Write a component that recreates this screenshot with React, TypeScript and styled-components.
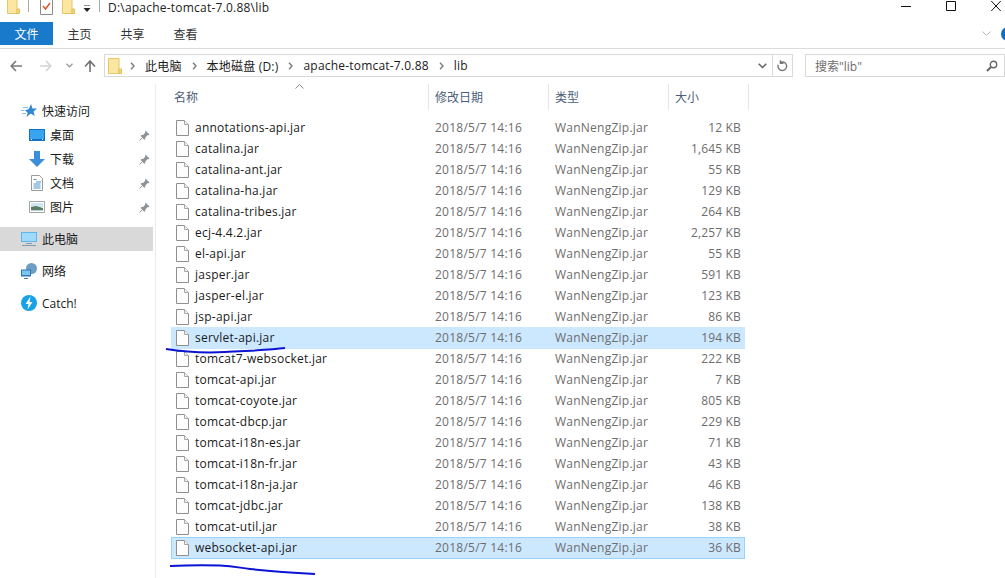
import React from 'react';
import styled, { createGlobalStyle } from 'styled-components';

const Global = createGlobalStyle`
  html, body { margin: 0; padding: 0; background: #fff; overflow: hidden; }
  body { font-family: "Open Sans", "Noto Sans CJK SC", sans-serif; font-size: 12px; color: #1a1a1a; }
`;

const Window = styled.div`
  position: relative;
  width: 1005px;
  height: 578px;
  overflow: hidden;
  display: flex;
  flex-direction: column;
  background: #fff;
`;

const TitleBar = styled.div`
  height: 22px;
  display: flex;
  align-items: flex-start;
  flex: none;
`;

const QuickTools = styled.div`
  display: flex;
  align-items: flex-start;
  padding-left: 7px;
  height: 14px;
`;

const ToolSep = styled.div<{ $ml: number; $mr: number }>`
  width: 1px;
  height: 12px;
  background: #a8a8a8;
  margin: 0 ${p => p.$mr}px 0 ${p => p.$ml}px;
`;

const TitleText = styled.div`
  font-size: 12px;
  line-height: 16px;
  letter-spacing: 0.22px;
  color: #222;
  margin-left: 8px;
`;

const WinButtons = styled.div`
  margin-left: auto;
  display: flex;
  gap: 35px;
  padding-right: 4px;
  color: #111;
`;

const Ribbon = styled.div`
  height: 26px;
  display: flex;
  border-bottom: 1px solid #dadbdc;
  flex: none;
  position: relative;
`;

const FileTab = styled.div`
  width: 53px;
  height: 23px;
  box-sizing: border-box;
  padding-top: 1px;
  background: #1979ca;
  color: #fff;
  display: flex;
  align-items: center;
  justify-content: center;
`;

const Tab = styled.div`
  width: 53px;
  height: 23px;
  box-sizing: border-box;
  padding-top: 1px;
  display: flex;
  align-items: center;
  justify-content: center;
  color: #333;
`;

const RibbonEnd = styled.div`
  margin-left: auto;
  display: flex;
  align-items: center;
  gap: 10px;
  height: 23px;
  margin-right: -10px;
`;

const HelpDot = styled.div`
  width: 14px;
  height: 14px;
  border-radius: 50%;
  background: #0f6fc6;
`;

const NavRow = styled.div`
  height: 23px;
  margin-top: 5px;
  display: flex;
  align-items: stretch;
  flex: none;
`;

const NavButtons = styled.div`
  width: 104px;
  display: flex;
  align-items: center;
  flex: none;
  padding-left: 10px;
  box-sizing: border-box;
`;

const NavGlyph = styled.svg<{ $ml: number }>`
  margin-left: ${p => p.$ml}px;
  flex: none;
`;

const AddressBox = styled.div`
  width: 689px;
  box-sizing: border-box;
  border: 1px solid #d9d9d9;
  display: flex;
  align-items: center;
  flex: none;
  padding-left: 3px;
`;

const Crumb = styled.span`
  color: #1a1a1a;
  letter-spacing: 0.2px;
`;

const CrumbArrow = styled.svg<{ $first?: boolean }>`
  margin: 0 10px 0 ${p => (p.$first ? 8 : 10)}px;
  flex: none;
`;

const AddressEnd = styled.div`
  margin-left: auto;
  display: flex;
  align-items: center;
  height: 100%;
`;

const RefreshCell = styled.div`
  width: 19px;
  height: 100%;
  border-left: 1px solid #d9d9d9;
  display: flex;
  align-items: center;
  justify-content: center;
  margin-left: 5px;
`;

const SearchBox = styled.div`
  margin-left: 12px;
  flex: 1;
  border: 1px solid #d9d9d9;
  display: flex;
  align-items: center;
  justify-content: space-between;
  padding: 0 6px 0 9px;
  color: #6d6d6d;
`;

const Body = styled.div`
  flex: 1;
  display: flex;
  min-height: 0;
  margin-top: 7px;
`;

const Sidebar = styled.nav`
  width: 156px;
  box-sizing: border-box;
  border-right: 1px solid #ececec;
  padding-top: 15px;
  flex: none;
`;

const NavItem = styled.div<{ $depth?: boolean; $active?: boolean; $gap?: number }>`
  height: 24px;
  width: 153px;
  display: flex;
  align-items: center;
  box-sizing: border-box;
  padding-left: ${p => (p.$depth ? 29 : 21)}px;
  margin-bottom: ${p => p.$gap ?? 0}px;
  background: ${p => (p.$active ? '#d9d9d9' : 'transparent')};
  color: #1a1a1a;
  svg.main { flex: none; margin-right: 5px; }
  svg.pin { margin-left: auto; margin-right: 3px; }
`;

const Files = styled.section`
  flex: 1;
  padding-left: 14px;
  min-width: 0;
`;

const HeaderRow = styled.div`
  position: relative;
  display: grid;
  grid-template-columns: 259px 120px 120px 80px;
  height: 26px;
  margin-bottom: 7px;
  color: #4c607a;
`;

const HeaderCell = styled.div<{ $first?: boolean }>`
  display: flex;
  align-items: center;
  padding-left: ${p => (p.$first ? 4 : 6)}px;
  border-right: 1px solid #e5e5e5;
  box-sizing: border-box;
  height: 26px;
`;

const SortMark = styled.svg`
  position: absolute;
  left: 125px;
  top: 0;
`;

const FileRow = styled.div<{ $state?: 'hover' | 'selected' }>`
  position: relative;
  isolation: isolate;
  display: grid;
  grid-template-columns: 259px 120px 120px 71px;
  height: 21px;
  width: 574px;
  margin-left: 1px;
  align-items: center;
  &::before {
    content: '';
    display: ${p => (p.$state ? 'block' : 'none')};
    position: absolute;
    inset: 0 0 -1px 0;
    z-index: -1;
    background: #cce8ff;
    box-shadow: ${p => (p.$state === 'selected' ? 'inset 0 0 0 1px #99d1ff' : 'none')};
  }
`;

const NameCell = styled.div`
  display: flex;
  align-items: center;
  padding-left: 5px;
  color: #1a1a1a;
  letter-spacing: 0.24px;
  svg { margin-right: 6px; flex: none; }
`;

const MetaCell = styled.div`
  color: #6d6d6d;
  padding-left: 5px;
  letter-spacing: 0.24px;
`;

const SizeCell = styled.div`
  color: #6d6d6d;
  text-align: right;
  letter-spacing: 0.15px;
`;

const Annotation = styled.svg`
  position: absolute;
  left: 0;
  top: 0;
  pointer-events: none;
`;

const rows: [string, string][] = [
  ['annotations-api.jar', '12 KB'],
  ['catalina.jar', '1,645 KB'],
  ['catalina-ant.jar', '55 KB'],
  ['catalina-ha.jar', '129 KB'],
  ['catalina-tribes.jar', '264 KB'],
  ['ecj-4.4.2.jar', '2,257 KB'],
  ['el-api.jar', '55 KB'],
  ['jasper.jar', '591 KB'],
  ['jasper-el.jar', '123 KB'],
  ['jsp-api.jar', '86 KB'],
  ['servlet-api.jar', '194 KB'],
  ['tomcat7-websocket.jar', '222 KB'],
  ['tomcat-api.jar', '7 KB'],
  ['tomcat-coyote.jar', '805 KB'],
  ['tomcat-dbcp.jar', '229 KB'],
  ['tomcat-i18n-es.jar', '71 KB'],
  ['tomcat-i18n-fr.jar', '43 KB'],
  ['tomcat-i18n-ja.jar', '46 KB'],
  ['tomcat-jdbc.jar', '138 KB'],
  ['tomcat-util.jar', '38 KB'],
  ['websocket-api.jar', '36 KB'],
];

const FolderIcon = () => (
  <svg width="14" height="16" viewBox="0 0 14 16" style={{ flex: 'none' }}>
    <path d="M.5.5h10.500v15H.5z" fill="#fbe6a2" stroke="#e8c766" />
    <path d="M11 11h2.500v4.500H11z" fill="#f4d77f" stroke="#e3bf5c" />
  </svg>
);

const FileIcon = () => (
  <svg width="13" height="16" viewBox="0 0 13 16">
    <path d="M.5.5h8l4 4v11H.5z" fill="#fdfdfd" stroke="#8f8f8f" />
    <path d="M8.500.5v4h4" fill="#f2f2f2" stroke="#a8a8a8" />
  </svg>
);

const Pin = () => (
  <svg className="pin" width="11" height="11" viewBox="0 0 11 11">
    <path d="M6.500.5l4 4-1 .8-.8-.2L6.400 7.400l-.2 1.800-1 .6L1.600 6l.7-.9 1.800-.2 2.300-2.300-.2-.9z" fill="#8d9399" />
    <path d="M3 8L.5 10.500" stroke="#8d9399" />
  </svg>
);

const Chevron = ({ first }: { first?: boolean }) => (
  <CrumbArrow $first={first} width="5" height="8" viewBox="0 0 5 8">
    <path d="M1 .8L4 4 1 7.200" fill="none" stroke="#7c7c7c" strokeWidth="1.400" />
  </CrumbArrow>
);

const TopFolder = () => (
  <svg width="13" height="14" viewBox="0 0 13 14">
    <path d="M.5-2h9.500v15.500H.5z" fill="#fbe6a2" stroke="#e8c766" />
    <path d="M10 9h2.500v4.500H10z" fill="#f4d77f" stroke="#e3bf5c" />
  </svg>
);

export default function App() {
  return (
    <Window>
      <Global />
      <TitleBar>
        <QuickTools>
          <TopFolder />
          <ToolSep $ml={8} $mr={11} />
          <svg width="13" height="15" viewBox="0 0 13 15" style={{ marginRight: 9 }}>
            <path d="M.5-2h12v16.500H.5z" fill="#fff" stroke="#8c8c8c" />
            <path d="M3 6l2.500 3L10 3" fill="none" stroke="#d9582b" strokeWidth="1.500" />
          </svg>
          <TopFolder />
          <svg width="8" height="8" viewBox="0 0 8 8" style={{ margin: '5px 8px 0 8px' }}>
            <path d="M1 0h6" stroke="#222" />
            <path d="M.5 3h7L4 7z" fill="#222" />
          </svg>
          <ToolSep $ml={0} $mr={0} />
        </QuickTools>
        <TitleText>D:\apache-tomcat-7.0.88\lib</TitleText>
        <WinButtons>
          <svg width="10" height="12" viewBox="0 0 10 12"><path d="M0 6.500h10" stroke="#111" /></svg>
          <svg width="10" height="12" viewBox="0 0 10 12"><path d="M.5 1.500h9v9h-9z" fill="none" stroke="#111" /></svg>
          <svg width="10" height="12" viewBox="0 0 10 12"><path d="M.3 1l9.400 10M9.700 1L.3 11" stroke="#111" /></svg>
        </WinButtons>
      </TitleBar>

      <Ribbon>
        <FileTab>文件</FileTab>
        <Tab>主页</Tab>
        <Tab>共享</Tab>
        <Tab>查看</Tab>
        <RibbonEnd>
          <svg width="9" height="6" viewBox="0 0 9 6"><path d="M.5.5L4.500 4.500 8.500.5" fill="none" stroke="#b4b4b4" /></svg>
          <HelpDot />
        </RibbonEnd>
      </Ribbon>

      <NavRow>
        <NavButtons>
          <NavGlyph $ml={0} width="12" height="12" viewBox="0 0 12 12"><path d="M6 1L1.200 6 6 11M1.200 6H12" fill="none" stroke="#7a7a7a" strokeWidth="1.600" /></NavGlyph>
          <NavGlyph $ml={18} width="12" height="12" viewBox="0 0 12 12"><path d="M6 1l4.800 5L6 11M10.800 6H0" fill="none" stroke="#d4d4d4" strokeWidth="1.600" /></NavGlyph>
          <NavGlyph $ml={14} width="7" height="5" viewBox="0 0 7 5"><path d="M.5.8L3.500 3.800 6.500.8" fill="none" stroke="#9a9a9a" strokeWidth="1.300" /></NavGlyph>
          <NavGlyph $ml={11} width="12" height="12" viewBox="0 0 12 12"><path d="M1 6.500L6 1l5 5.500M6 1v11" fill="none" stroke="#6f6f6f" strokeWidth="1.600" /></NavGlyph>
        </NavButtons>
        <AddressBox>
          <FolderIcon />
          <Chevron first />
          <Crumb>此电脑</Crumb>
          <Chevron />
          <Crumb>本地磁盘 (D:)</Crumb>
          <Chevron />
          <Crumb>apache-tomcat-7.0.88</Crumb>
          <Chevron />
          <Crumb>lib</Crumb>
          <AddressEnd>
            <svg width="9" height="6" viewBox="0 0 9 6"><path d="M.7.8L4.500 4.500 8.300.8" fill="none" stroke="#606060" strokeWidth="1.500" /></svg>
            <RefreshCell>
              <svg width="11" height="12" viewBox="0 0 11 12"><path d="M3 2.600a4.300 4.300 0 1 1-1.700 2.100M3.400.3v3h3.100" fill="none" stroke="#777" strokeWidth="1.400" /></svg>
            </RefreshCell>
          </AddressEnd>
        </AddressBox>
        <SearchBox>
          <span>搜索"lib"</span>
          <svg width="12" height="12" viewBox="0 0 12 12"><circle cx="7.500" cy="4.500" r="3.200" fill="none" stroke="#666" strokeWidth="1.400" /><path d="M5 7L1 11" stroke="#666" strokeWidth="2" /></svg>
        </SearchBox>
      </NavRow>

      <Body>
        <Sidebar>
          <NavItem>
            <svg className="main" width="16" height="14" viewBox="0 0 16 14">
              <path d="M10 0l1.500 4.400 4.500.2-3.500 2.800 1.200 4.600-3.900-2.500L5.500 13l1.200-4.300L4 6.300l3.900-1.200z" fill="#2f86d6" />
              <path d="M2 3.500h5M0 6.500h3.500M1 9.500h4" stroke="#8dbde8" />
            </svg>
            快速访问
          </NavItem>
          <NavItem $depth>
            <svg className="main" width="16" height="12" viewBox="0 0 16 12">
              <path d="M0 0h16v12H0z" fill="#0f72c4" />
              <path d="M1 1h14v9H1z" fill="#39a5ef" />
              <path d="M2 10.500h1M13 10.500h1" stroke="#dff" />
            </svg>
            桌面
            <Pin />
          </NavItem>
          <NavItem $depth>
            <svg className="main" width="16" height="16" viewBox="0 0 16 16">
              <path d="M5 0h6v8h5l-8 8-8-8h5z" fill="#3a8edb" />
            </svg>
            下载
            <Pin />
          </NavItem>
          <NavItem $depth>
            <svg className="main" width="16" height="16" viewBox="0 0 16 16">
              <path d="M2.500.5h8l3 3v12h-11z" fill="#fff" stroke="#9a9a9a" />
              <path d="M4.500 4.500h3M7 7h5M4.500 9h7M4.500 11h7M4.500 13h7" stroke="#4a93c9" />
            </svg>
            文档
            <Pin />
          </NavItem>
          <NavItem $depth $gap={8}>
            <svg className="main" width="16" height="12" viewBox="0 0 16 12">
              <path d="M.5.5h15v11H.5z" fill="#fff" stroke="#a5a5a5" />
              <path d="M2 2h12v4H2z" fill="#cfe6f2" />
              <path d="M2 6l5-1 7 2v3H2z" fill="#5b7f66" />
              <path d="M2 9h12v1H2z" fill="#b9cfd8" />
            </svg>
            图片
            <Pin />
          </NavItem>
          <NavItem $active $gap={8}>
            <svg className="main" width="16" height="16" viewBox="0 0 16 16">
              <path d="M0 1h16v10H0z" fill="#5fb6ea" />
              <path d="M1 2h14v8H1z" fill="#9edbfa" />
              <path d="M5 12.500h6M1 14.500h14" stroke="#7f9bb2" />
            </svg>
            此电脑
          </NavItem>
          <NavItem $gap={8}>
            <svg className="main" width="16" height="16" viewBox="0 0 16 16">
              <circle cx="10.500" cy="5.500" r="5.500" fill="#6d9ec4" />
              <path d="M0 6.500h10v7H0z" fill="#2b79b5" />
              <path d="M1 7.500h8v4.500H1z" fill="#7cc5ee" />
              <path d="M3 15.500h4" stroke="#55728a" />
            </svg>
            网络
          </NavItem>
          <NavItem>
            <svg className="main" width="16" height="16" viewBox="0 0 16 16">
              <circle cx="8" cy="8" r="8" fill="#17a2e8" />
              <path d="M9.500 1.500L4.500 9h3l-1 5.500L11.500 7h-3z" fill="#fff" />
            </svg>
            Catch!
          </NavItem>
        </Sidebar>

        <Files>
          <HeaderRow>
            <HeaderCell $first>名称</HeaderCell>
            <HeaderCell>修改日期</HeaderCell>
            <HeaderCell>类型</HeaderCell>
            <HeaderCell>大小</HeaderCell>
            <SortMark width="9" height="5" viewBox="0 0 9 5">
              <path d="M.5 4.500L4.500.5l4 4" fill="none" stroke="#8a8a8a" />
            </SortMark>
          </HeaderRow>
          {rows.map(([name, size]) => (
            <FileRow
              key={name}
              $state={name === 'servlet-api.jar' ? 'hover' : name === 'websocket-api.jar' ? 'selected' : undefined}
            >
              <NameCell><FileIcon />{name}</NameCell>
              <MetaCell>2018/5/7 14:16</MetaCell>
              <MetaCell>WanNengZip.jar</MetaCell>
              <SizeCell>{size}</SizeCell>
            </FileRow>
          ))}
        </Files>
      </Body>

      <Annotation width="1005" height="578" viewBox="0 0 1005 578">
        <path d="M166 349C185 352 205 353 225 352S270 350 285 348" fill="none" stroke="#0a14d2" strokeWidth="2" />
        <path d="M170 566C190 565 205 565 220 565.500S240 568 250 569S290 572.500 315 574" fill="none" stroke="#0a14d2" strokeWidth="2" />
      </Annotation>
    </Window>
  );
}
